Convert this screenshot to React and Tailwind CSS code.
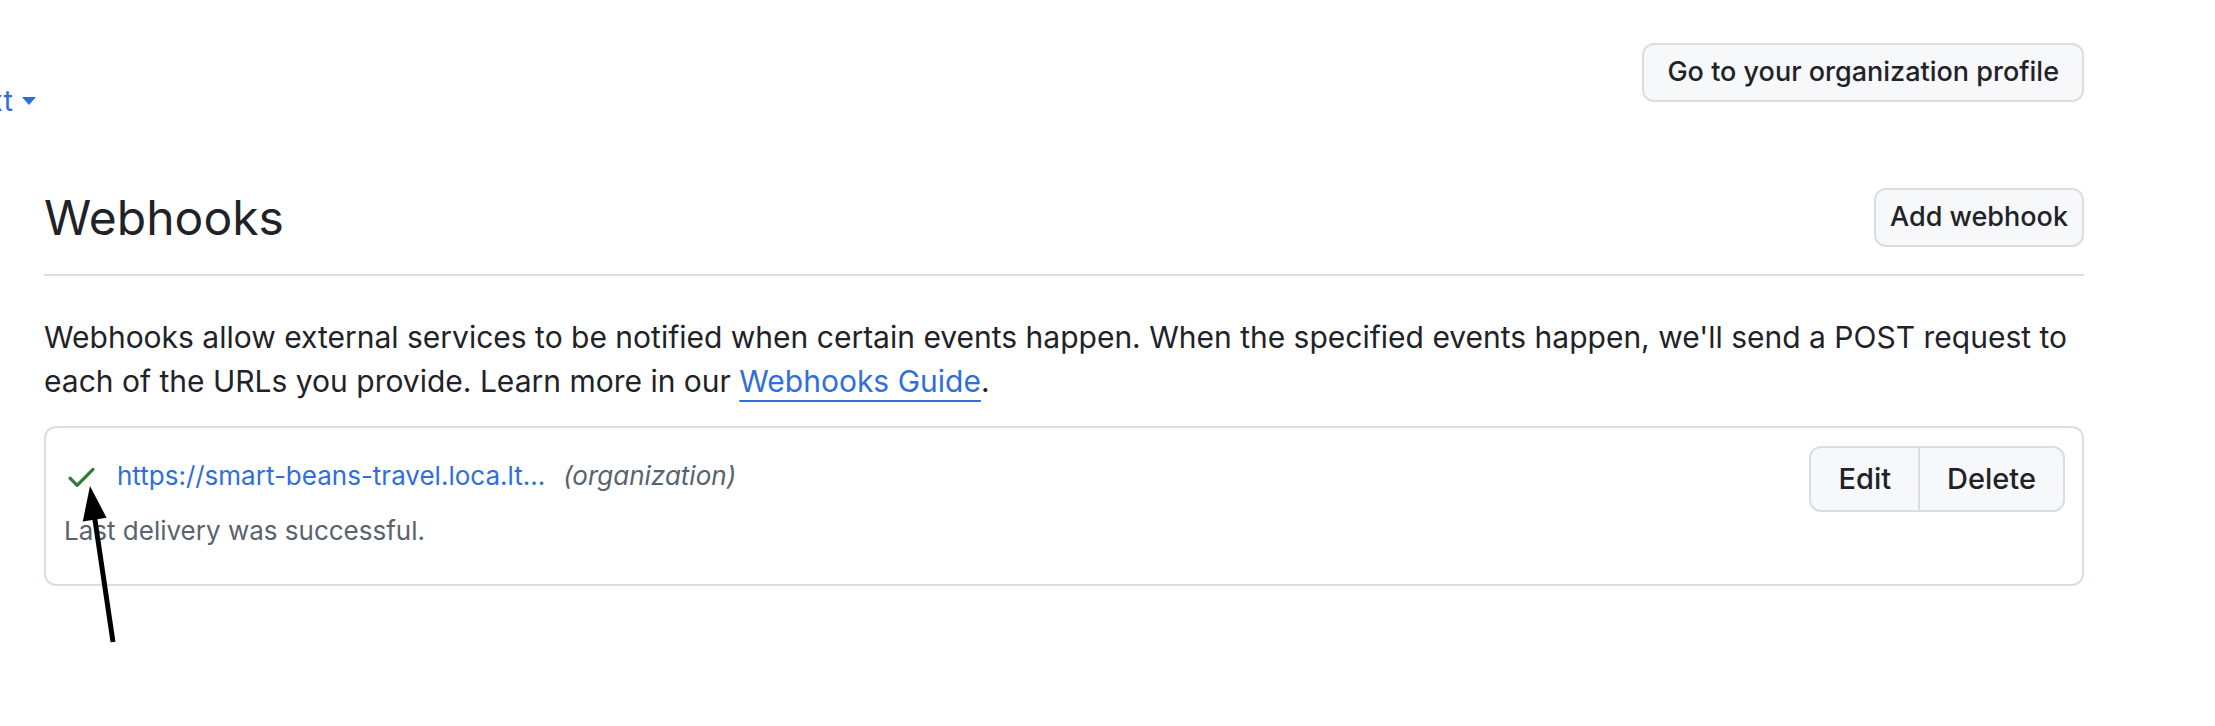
function CheckIcon({ className }) {
  return (
    <svg viewBox="0 0 16 16" className={className} fill="currentColor" aria-hidden="true">
      <path d="M13.78 4.22a.75.75 0 0 1 0 1.06l-7.25 7.25a.75.75 0 0 1-1.06 0L2.22 9.28a.751.751 0 0 1 .018-1.042.751.751 0 0 1 1.042-.018L6 10.94l6.72-6.72a.75.75 0 0 1 1.06 0Z" />
    </svg>
  );
}

function Caret() {
  return (
    <svg viewBox="0 0 14 8" className="ml-[9px] h-[8px] w-[14px]" fill="currentColor" aria-hidden="true">
      <path d="M0 0h14L7 8Z" />
    </svg>
  );
}

// annotation drawn on top of the screenshot
function Arrow() {
  return (
    <svg className="pointer-events-none absolute left-[70px] top-[480px] h-[170px] w-[60px]" viewBox="0 0 60 170" aria-hidden="true">
      <line x1="24.7" y1="38" x2="43" y2="162" stroke="#000" strokeWidth="5" />
      <polygon points="20,6 36.6,37.8 12.8,41.4" fill="#000" />
    </svg>
  );
}

export default function App() {
  return (
    <div className="relative h-[726px] overflow-hidden bg-white font-['Inter','Liberation_Sans',sans-serif] text-[#1f2328]">
      <div className="flex items-start justify-between pr-[131px] pt-[43px]">
        <a href="#" className="mt-[36px] flex items-center text-[29px] leading-[44px] text-[#2f6fdb]">
          <span className="-ml-[13px]">xt</span>
          <Caret />
        </a>
        <button className="h-[59px] rounded-[12px] border-2 border-[#d8dee4] bg-[#f6f8fa] px-[23px] text-[27px] font-medium">
          Go to your organization profile
        </button>
      </div>

      <div className="pl-[44px] pr-[131px]">
        <div className="mt-[57px] flex items-center justify-between border-b-2 border-[#d8dee4] pb-[19px]">
          <h2 className="text-[48px] leading-[75px] font-normal">Webhooks</h2>
          <button className="h-[59px] rounded-[12px] border-2 border-[#d8dee4] bg-[#f6f8fa] px-[14px] text-[27px] font-medium">
            Add webhook
          </button>
        </div>

        <p className="mt-[39px] text-[30px] leading-[44px]">
          Webhooks allow external services to be notified when certain events happen. When the specified events happen, we'll send a POST request to each of the URLs you provide. Learn more in our{' '}
          <a href="#" className="text-[#2f6fdb] underline decoration-2 underline-offset-[8px]">Webhooks Guide</a>.
        </p>

        <div className="mt-[23px] flex items-start justify-between rounded-[12px] border-2 border-[#d8dee4] py-[18px] pl-[18px] pr-[17px]">
          <div className="pt-[8px] pb-[13px]">
            <div className="flex items-center">
              <CheckIcon className="h-[35px] w-[35px] text-[#2f7d3a]" />
              <a href="#" className="ml-[18px] text-[26px] leading-[44px] text-[#2f6fdb]">https://smart-beans-travel.loca.lt...</a>
              <span className="ml-[18px] text-[26px] italic leading-[44px] text-[#59636e]">(organization)</span>
            </div>
            <p className="mt-[11px] text-[26px] leading-[44px] text-[#59636e]">Last delivery was successful.</p>
          </div>
          <div className="flex h-[66px] overflow-hidden rounded-[12px] border-2 border-[#d8dee4] bg-[#f6f8fa] text-[29px] font-medium">
            <button className="border-r-2 border-[#d8dee4] px-[27px]">Edit</button>
            <button className="px-[27px]">Delete</button>
          </div>
        </div>
      </div>

      <Arrow />
    </div>
  );
}
